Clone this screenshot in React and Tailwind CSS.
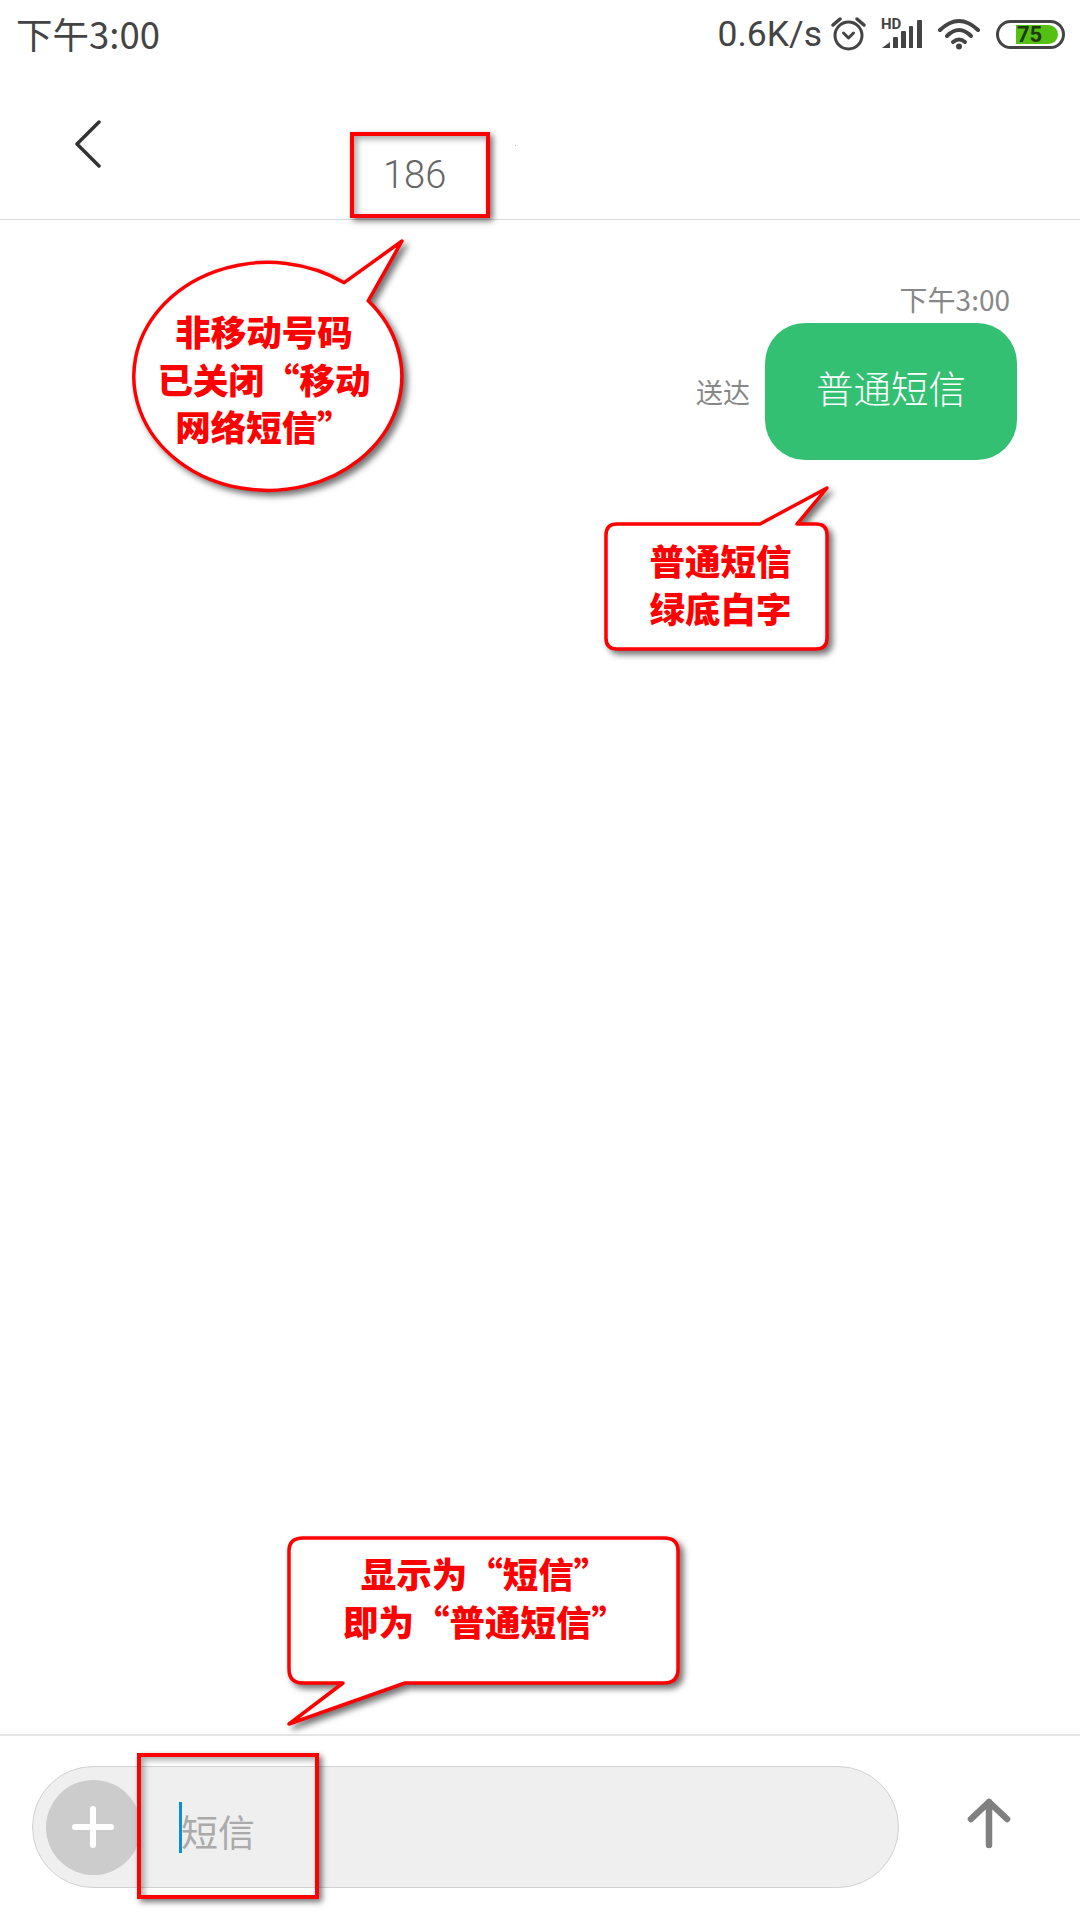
import React from 'react';

const CJK = "font-['Noto_Sans_CJK_SC','Roboto',sans-serif]";

const AlarmIcon = () => (
  <svg width="36" height="36" viewBox="0 0 36 36" fill="none" stroke="#444" strokeLinecap="round">
    <circle cx="17.500" cy="19.500" r="13.500" strokeWidth="3" />
    <path d="M12.500 17 L17.500 22 L22.500 17" strokeWidth="3" strokeLinejoin="round" />
    <path d="M2 9 L9 3" strokeWidth="3.500" />
    <path d="M33 9 L26 3" strokeWidth="3.500" />
  </svg>
);

const SignalIcon = () => (
  <svg width="42" height="32" viewBox="0 0 42 32" fill="#444">
    <text x="0" y="11" fontFamily="Roboto, sans-serif" fontWeight="700" fontSize="15">HD</text>
    <path d="M1 30 L9 24 L9 30 Z" />
    <path d="M12 30 L12 20 Q12 19 13 19 L16 19 Q17 19 17 20 L17 30 Z" />
    <path d="M20 30 L20 14 Q20 13 21 13 L24 13 Q25 13 25 14 L25 30 Z" />
    <path d="M28 30 L28 9 Q28 8 29 8 L31 8 Q32 8 32 9 L32 30 Z" />
    <path d="M36 30 L36 3 Q36 2 37 2 L40 2 Q41 2 41 3 L41 30 Z" />
  </svg>
);

const WifiIcon = () => (
  <svg width="44" height="32" viewBox="0 0 44 32" fill="none" stroke="#444" strokeWidth="4" strokeLinecap="round">
    <path d="M3 12 Q22 -6 41 12" />
    <path d="M10 18 Q22 6 34 18" />
    <path d="M16 24 Q22 19 28 24" />
    <circle cx="22" cy="28.500" r="3" fill="#444" stroke="none" />
  </svg>
);

const Battery = () => (
  <div className="w-[69px] h-[29px] rounded-full border-[3px] border-[#444] flex items-center justify-end pr-[4px]">
    <div className="w-[42px] h-[19px] bg-[#55c012] rounded-r-full flex items-center">
      <span className="font-['Roboto',sans-serif] font-bold text-[22px] leading-[19px] text-[#1f3a10] pl-[1px]">75</span>
    </div>
  </div>
);

const Note = ({ lines, className }) => (
  <div className={`absolute text-center text-[#ff0000] font-black text-[35.500px] leading-[47.500px] ${CJK} ${className}`}>
    {lines.map((line) => (
      <div key={line}>{line}</div>
    ))}
  </div>
);

const RED_SHADOW = 'drop-shadow-[4px_4px_3px_rgba(0,0,0,0.55)]';

const Bubble = ({ className, width, height, d }) => (
  <svg
    className={`absolute ${RED_SHADOW} ${className}`}
    width={width}
    height={height}
    viewBox={`0 0 ${width} ${height}`}
  >
    <path d={d} fill="#fff" stroke="#ff0000" strokeWidth="3.500" strokeLinejoin="round" />
  </svg>
);

const RedBox = ({ className }) => (
  <div className={`absolute border-[4px] border-[#ff0000] shadow-[3px_3px_6px_rgba(0,0,0,0.55),inset_3px_3px_6px_rgba(0,0,0,0.35)] ${className}`} />
);

const App = () => {
  return (
    <div className={`relative w-[1080px] h-[1920px] overflow-hidden bg-white flex flex-col ${CJK}`}>
      {/* status bar */}
      <div className="h-[68px] flex items-center justify-between pl-[16px] pr-[15px] text-[#444]">
        <span className="text-[36.500px] leading-[44px]">下午3:00</span>
        <div className="flex items-center">
          <span className="font-['Roboto',sans-serif] text-[35.500px] leading-[44px]">0.6K/s</span>
          <div className="ml-[9px]"><AlarmIcon /></div>
          <div className="ml-[14px]"><SignalIcon /></div>
          <div className="ml-[14px]"><WifiIcon /></div>
          <div className="ml-[15px]"><Battery /></div>
        </div>
      </div>

      {/* header */}
      <div className="h-[152px] border-b border-[#d9d9d9] flex items-start">
        <svg className="ml-[74px] mt-[52px]" width="28" height="48" viewBox="0 0 28 48" fill="none" stroke="#333" strokeWidth="3.500" strokeLinecap="round" strokeLinejoin="round">
          <path d="M25 2 L3 24 L25 46" />
        </svg>
        <span className="ml-[281px] mt-[83px] font-['Roboto',sans-serif] font-light text-[38px] leading-[48px] text-[#666]">186</span>
      </div>

      {/* messages */}
      <div className="flex-1 flex flex-col items-end pr-[63px] pt-[60px]">
        <span className="text-[28px] leading-[38px] text-[#888] pr-[7px]">下午3:00</span>
        <div className="flex items-center mt-[5px]">
          <span className="text-[27px] leading-none text-[#888] mr-[15px]">送达</span>
          <div className="w-[252px] h-[137px] rounded-[40px] bg-[#34c073] flex items-center justify-center pb-[9px]">
            <span className="text-white text-[37.500px] font-light leading-none">普通短信</span>
          </div>
        </div>
      </div>

      {/* input bar */}
      <div className="h-[186px] border-t-2 border-[#e6e6e6] pl-[32px] pt-[30px] flex items-start">
        <div className="w-[867px] h-[122px] rounded-full bg-[#efefef] border border-[#d2d2d2] flex items-center pl-[13px]">
          <div className="w-[95px] h-[95px] rounded-full bg-[#cccccc] flex items-center justify-center pr-[2px]">
            <svg width="42" height="42" viewBox="0 0 42 42" stroke="#fff" strokeWidth="6" strokeLinecap="round">
              <path d="M21 3 L21 39 M3 21 L39 21" />
            </svg>
          </div>
          <div className="ml-[38px] w-[3px] h-[51px] bg-[#0a8ed6]" />
          <span className="ml-[-1px] mt-[8px] text-[37px] leading-none text-[#aaaaaa]">短信</span>
        </div>
        <svg className="ml-[67px] mt-[31px]" width="46" height="52" viewBox="0 0 46 52" fill="none" stroke="#808080" strokeWidth="6.500" strokeLinecap="round" strokeLinejoin="round">
          <path d="M23 48 L23 5 M5 22 L23 5 L41 22" />
        </svg>
      </div>

      {/* annotations drawn over the screenshot */}
      <RedBox className="left-[350px] top-[132px] w-[140px] h-[86px]" />
      <div className="absolute left-[515px] top-[145px] w-px h-px bg-[#bbb]" />
      <Bubble
        className="left-[120px] top-[230px]"
        width={300}
        height={270}
        d="M224.200 52.700 L282 11 L248.200 70.850 A134 114 0 1 1 224.200 52.700 Z"
      />
      <Note className="left-[114px] top-[307px] w-[300px]" lines={['非移动号码', '已关闭“移动', '网络短信”']} />
      <Bubble
        className="left-[600px] top-[480px]"
        width={240}
        height={180}
        d="M160 44 L227 8 L197 44 L216 44 Q227 44 227 55 L227 158 Q227 169 216 169 L17 169 Q6 169 6 158 L6 55 Q6 44 17 44 Z"
      />
      <Note className="left-[600px] top-[536px] w-[241px]" lines={['普通短信', '绿底白字']} />
      <Bubble
        className="left-[280px] top-[1530px]"
        width={410}
        height={200}
        d="M63 153 L9 194 L125 153 L384 153 Q398 153 398 139 L398 21 Q398 8 384 8 L23 8 Q9 8 9 21 L9 139 Q9 153 23 153 Z"
      />
      <Note className="left-[291px] top-[1549px] w-[388px]" lines={['显示为“短信”', '即为“普通短信”']} />
      <RedBox className="left-[137px] top-[1753px] w-[182px] h-[146px]" />
    </div>
  );
};

export default App;
